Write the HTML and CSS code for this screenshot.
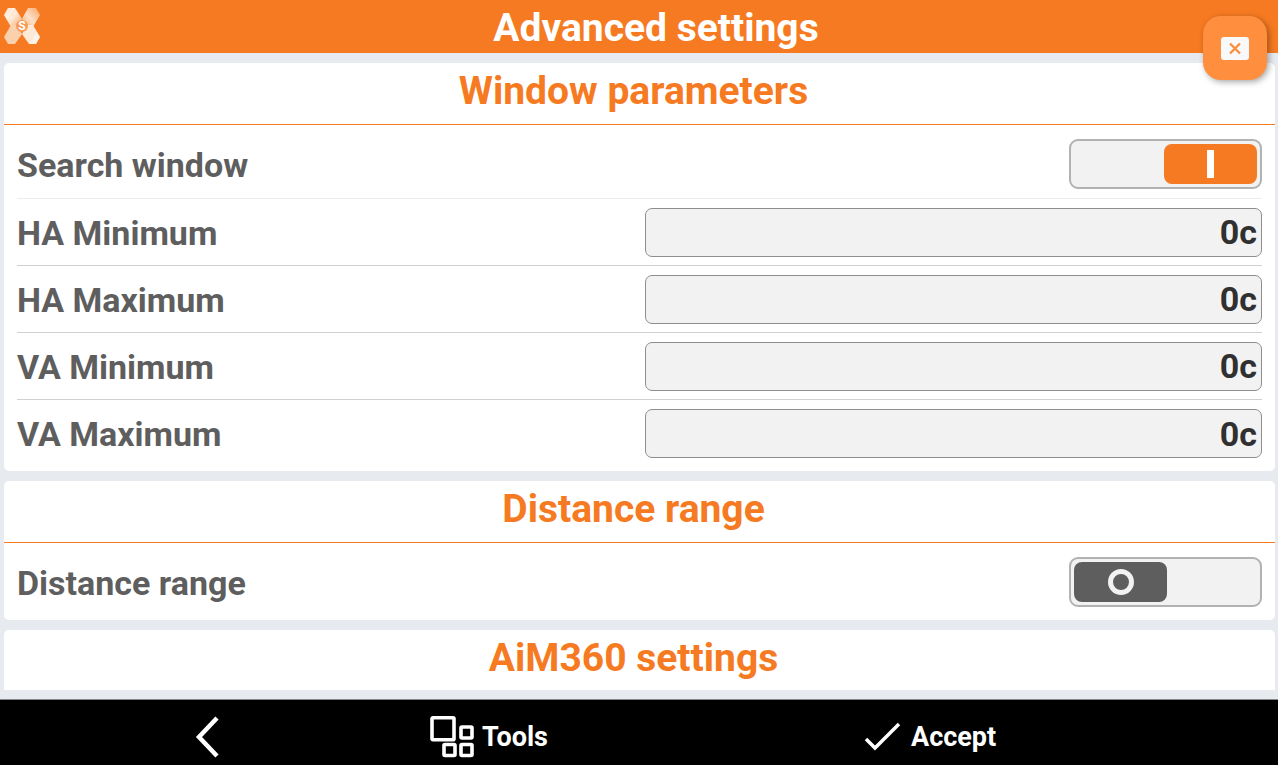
FILE: index.html
```html
<!DOCTYPE html>
<html lang="en">
<head>
<meta charset="utf-8">
<title>Advanced settings</title>
<link rel="stylesheet" href="styles.css">
</head>
<body>
<div class="app">
  <header class="topbar">
    <svg class="logo" viewBox="0 0 36 37" aria-hidden="true">
      <defs>
        <linearGradient id="armLeft" x1="0" y1="0" x2="1" y2="1">
          <stop offset="0" stop-color="#fbc79d"/><stop offset="0.45" stop-color="#ffeedd"/><stop offset="1" stop-color="#f9a566"/>
        </linearGradient>
        <linearGradient id="armRight" x1="1" y1="0" x2="0" y2="1">
          <stop offset="0" stop-color="#f9a566"/><stop offset="0.55" stop-color="#fde0c8"/><stop offset="1" stop-color="#f9b079"/>
        </linearGradient>
      </defs>
      <path fill="url(#armLeft)" d="M4 0h7l7 11-5 8H7L0 7z"/>
      <path fill="url(#armRight)" d="M24 0h8l4 7-7 12h-6l-5-8z"/>
      <path fill="#fbd0ad" d="M7 17h6l5 9-7 10H4L0 29z"/>
      <path fill="#fee9d8" d="M23 17h6l7 12-4 7h-7l-7-10z"/>
      <path fill="#fff" opacity="0.45" d="M4 0h7L3 12 0 7zM36 29l-4 7h-7l8-12z"/>
      <circle cx="18" cy="18" r="6" fill="#f89a55"/>
      <text class="logo-letter" x="18" y="22" text-anchor="middle">S</text>
    </svg>
    <h1 class="topbar-title">Advanced settings</h1>
  </header>
  <button class="close" type="button" aria-label="Close">
    <svg class="close-icon" viewBox="0 0 28 23" aria-hidden="true">
      <rect width="28" height="23" rx="3" fill="#f8f9fa"/>
      <path d="M9 6.500l10 10M19 6.500l-10 10" stroke="#fb8d3c" stroke-width="2.300" fill="none"/>
    </svg>
  </button>
  <main class="content">
    <section class="card">
      <h2 class="card-title">Window parameters</h2>
      <div class="rows">
        <div class="row row-switch"><label class="label" for="search">Search window</label><span class="switch"><input class="switch-input" id="search" type="checkbox" role="switch" checked><span class="knob"></span></span></div>
        <div class="row"><label class="label" for="hamin">HA Minimum</label><input class="field" id="hamin" type="text" value="0c"></div>
        <div class="row"><label class="label" for="hamax">HA Maximum</label><input class="field" id="hamax" type="text" value="0c"></div>
        <div class="row"><label class="label" for="vamin">VA Minimum</label><input class="field" id="vamin" type="text" value="0c"></div>
        <div class="row"><label class="label" for="vamax">VA Maximum</label><input class="field" id="vamax" type="text" value="0c"></div>
      </div>
    </section>
    <section class="card">
      <h2 class="card-title">Distance range</h2>
      <div class="rows">
        <div class="row row-switch"><label class="label" for="distance">Distance range</label><span class="switch"><input class="switch-input" id="distance" type="checkbox" role="switch"><span class="knob"></span></span></div>
      </div>
    </section>
    <section class="card card-cut">
      <h2 class="card-title">AiM360 settings</h2>
    </section>
  </main>
  <footer class="bottombar">
    <button class="action action-back" type="button" aria-label="Back">
      <svg class="icon-back" viewBox="0 0 24 42" aria-hidden="true"><path d="M22 2L4 21l18 19" fill="none" stroke="#fff" stroke-width="4.500"/></svg>
    </button>
    <button class="action" type="button">
      <svg class="icon-tools" viewBox="0 0 44 42" fill="none" stroke="#fff" stroke-width="3.600" aria-hidden="true"><rect x="2" y="1.800" width="22" height="22" rx="1"/><rect x="31" y="11" width="11" height="11" rx="1"/><rect x="14" y="28.500" width="11" height="11" rx="1"/><rect x="31" y="28.500" width="11" height="11" rx="1"/></svg>
      <span>Tools</span>
    </button>
    <button class="action action-accept" type="button">
      <svg class="icon-check" viewBox="0 0 37 30" aria-hidden="true"><path d="M2 17l9 9L35 2" fill="none" stroke="#fff" stroke-width="3.500"/></svg>
      <span>Accept</span>
    </button>
  </footer>
</div>
</body>
</html>
```
FILE: styles.css
```css
*, *::before { box-sizing: border-box; }
body {
  margin: 0;
  background: #e7ebef;
  font-family: Roboto, "Liberation Sans", sans-serif;
  font-weight: 700;
}
button, input { font: inherit; }
.app {
  position: relative;
  display: flex;
  flex-direction: column;
  height: 100vh;
}
.topbar {
  display: flex;
  align-items: center;
  flex: none;
  height: 53px;
  padding-left: 4px;
  background: #f67a21;
  color: #fff;
}
.logo { width: 36px; height: 37px; }
.logo-letter { font-size: 12px; font-weight: 700; fill: #fff; }
.topbar-title {
  flex: 1;
  margin: 0;
  padding: 2px 6px 0 0;
  font-size: 39px;
  line-height: 44px;
  text-align: center;
}
.close {
  position: absolute;
  top: 16px;
  right: 11px;
  display: flex;
  align-items: center;
  justify-content: center;
  width: 64px;
  height: 64px;
  padding: 0;
  border: 0;
  border-radius: 18px;
  background: #ff8f3e;
  box-shadow: 2px 2px 6px rgba(0, 0, 0, 0.35);
}
.close-icon { width: 28px; height: 23px; }
.content {
  display: flex;
  flex: 1;
  flex-direction: column;
  gap: 10px;
  min-height: 0;
  padding: 10px 3px 9px 4px;
  overflow: hidden;
}
.card {
  flex: none;
  padding-bottom: 4px;
  border-radius: 5px;
  background: #fff;
}
.card-cut {
  flex: 1;
  min-height: 0;
  padding-bottom: 0;
  border-radius: 5px 5px 0 0;
  overflow: hidden;
}
.card-title {
  margin: 0;
  padding: 6px 12px 10px 0;
  border-bottom: 1px solid #f67a21;
  color: #f67a21;
  font-size: 39px;
  line-height: 45px;
  text-align: center;
}
.card-cut .card-title { border-bottom: 0; }
.rows { padding: 0 13px; }
.row {
  display: grid;
  grid-template-columns: minmax(0, 628fr) minmax(0, 617fr);
  align-items: center;
  height: 67px;
  border-bottom: 1px solid #d0d0d0;
}
.row:last-child { border-bottom: 0; }
.row-switch { height: 74px; padding-top: 5px; border-color: #ececec; }
.row-switch:last-child { height: 73px; }
.label {
  padding-top: 1px;
  color: #5e5e5e;
  font-size: 34px;
  line-height: 40px;
}
.field {
  width: 100%;
  height: 49px;
  padding: 0 4px;
  border: 1px solid #8e8e8e;
  border-radius: 7px;
  background: #f2f2f2;
  color: #303030;
  font-size: 34px;
  text-align: right;
}
.switch {
  position: relative;
  justify-self: end;
  display: block;
  width: 193px;
  height: 50px;
}
.switch-input {
  appearance: none;
  display: block;
  width: 100%;
  height: 100%;
  margin: 0;
  border: 2px solid #b2b2b2;
  border-radius: 9px;
  background: #f2f2f2;
}
.knob {
  position: absolute;
  top: 5px;
  left: 5px;
  display: flex;
  align-items: center;
  justify-content: center;
  width: 93px;
  height: 40px;
  border-radius: 8px;
  background: #5e5e5e;
  pointer-events: none;
}
.knob::before {
  content: "";
  width: 26px;
  height: 26px;
  border: 5px solid #f2f2f2;
  border-radius: 50%;
}
.switch-input:checked + .knob {
  right: 5px;
  left: auto;
  background: #f67a21;
}
.switch-input:checked + .knob::before {
  width: 7px;
  height: 28px;
  border: 0;
  border-radius: 0;
  background: #fff;
}
.bottombar {
  display: grid;
  grid-template-columns: 430fr 434fr 414fr;
  flex: none;
  height: 66px;
  border-top: 1px solid #85888b;
  background: #000;
}
.action {
  display: flex;
  align-items: center;
  gap: 8px;
  padding: 8px 0 0;
  border: 0;
  background: none;
  color: #fff;
  font-size: 27px;
  line-height: 32px;
}
.action-back { justify-content: center; padding-right: 16px; }
.action-accept { gap: 10px; }
.icon-back { width: 24px; height: 42px; }
.icon-tools { width: 44px; height: 42px; }
.icon-check { width: 37px; height: 30px; }
```
